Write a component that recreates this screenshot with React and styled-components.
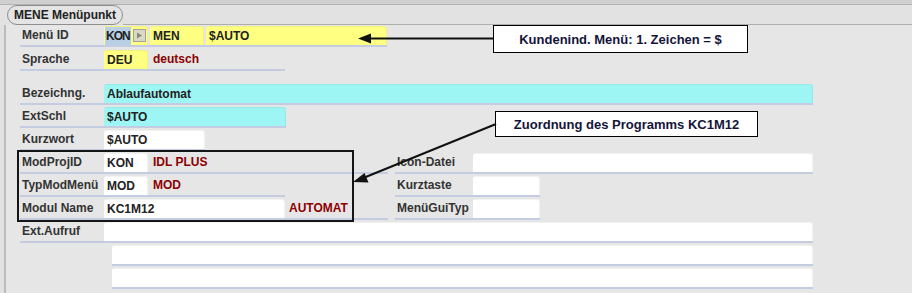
import React from "react";
import styled, { createGlobalStyle } from "styled-components";

const Global = createGlobalStyle`
  html, body { margin: 0; padding: 0; background: #e2e2e2; }
  body { font-family: "Liberation Sans", Arial, sans-serif; }
`;

const Page = styled.div`
  position: relative;
  width: 912px;
  height: 293px;
  overflow: hidden;
  display: flex;
  flex-direction: column;
  background: #e2e2e2;
`;

const TopStrip = styled.div`
  height: 4px;
  background: #d0d0d0;
  border-bottom: 1px solid #b2b2b2;
`;

const Header = styled.div`
  display: flex;
  height: 20px;
`;

const Tab = styled.div`
  margin-left: 7px;
  height: 20px;
  box-sizing: border-box;
  border: 1px solid #8e8e8e;
  border-radius: 10px;
  padding: 0 6px 0 6px;
  display: flex;
  align-items: center;
  font-weight: bold;
  font-size: 12px;
  color: #222;
  background: #e4e4e4;
  white-space: nowrap;
`;

const HeaderFill = styled.div`
  flex: 1;
  border-bottom: 1px solid #adadad;
`;

const Panel = styled.div`
  flex: 1;
  margin-left: 4px;
  border-left: 2px solid #bcbcbc;
  padding: 1px 0 0 14px;
  background: #e6e6e6;
  display: flex;
  flex-direction: column;
`;

const Row = styled.div`
  display: grid;
  grid-template-columns: 375px auto;
  margin-top: ${(p) => p.$mt || 0}px;
  margin-left: ${(p) => p.$ml || 0}px;
`;

const Group = styled.div`
  display: flex;
  align-items: flex-start;
  width: ${(p) => p.$w}px;
  height: 19px;
  border-bottom: 2px solid #c4cce1;
`;

const Label = styled.div`
  width: ${(p) => p.$w || 84}px;
  flex: none;
  box-sizing: border-box;
  padding-left: 2px;
  height: 19px;
  line-height: 19px;
  font-weight: bold;
  font-size: 12px;
  color: #333;
  white-space: nowrap;
`;

const Field = styled.div`
  position: relative;
  flex: none;
  width: ${(p) => p.$w}px;
  height: 19px;
  margin-left: ${(p) => p.$ml || 0}px;
  box-sizing: border-box;
  padding-left: 3px;
  background: ${(p) => p.$bg || "#ffffff"};
  border-radius: 3px 3px 0 0;
  box-shadow: inset -1px 1px 0 rgba(0, 0, 0, 0.05);
  display: flex;
  align-items: center;
  font-weight: bold;
  font-size: 12px;
  color: #222;
  white-space: nowrap;
`;

const Selected = styled.span`
  background: #b8cfe6;
  margin-left: -2px;
  padding: 2px 1px 2px 1px;
  letter-spacing: -1px;
`;

const DropButton = styled.div`
  position: absolute;
  left: 29px;
  top: 3px;
  width: 13px;
  height: 13px;
  box-sizing: border-box;
  border: 1px solid #a2a2a2;
  background: #d9d9c6;
  display: flex;
  align-items: center;
  justify-content: center;
`;

const Value = styled.div`
  height: 19px;
  line-height: 19px;
  padding-left: ${(p) => p.$pl || 5}px;
  font-weight: bold;
  font-size: 12px;
  color: #8b0000;
  white-space: nowrap;
`;

const Frame = styled.div`
  position: absolute;
  left: 17px;
  top: 150px;
  width: 337px;
  height: 72px;
  box-sizing: border-box;
  border: 2px solid #151515;
  pointer-events: none;
`;

const Note = styled.div`
  position: absolute;
  left: ${(p) => p.$x}px;
  top: ${(p) => p.$y}px;
  width: ${(p) => p.$w}px;
  height: ${(p) => p.$h}px;
  box-sizing: border-box;
  border: 1px solid #000;
  background: #fff;
  display: flex;
  align-items: center;
  justify-content: center;
  font-weight: bold;
  font-size: 13px;
  color: #14143a;
  white-space: nowrap;
`;

const Arrows = styled.svg`
  position: absolute;
  left: 0;
  top: 0;
  pointer-events: none;
`;

const YELLOW = "#ffff82";
const CYAN = "#9ef6f4";

export default function App() {
  return (
    <Page>
      <Global />
      <TopStrip />
      <Header>
        <Tab>MENE Menüpunkt</Tab>
        <HeaderFill />
      </Header>
      <Panel>
        <Row $mt={0}>
          <Group $w={367}>
            <Label>Menü ID</Label>
            <Field $w={44} $bg={YELLOW}>
              <Selected>KON</Selected>
              <DropButton>
                <svg width="7" height="7" viewBox="0 0 7 7">
                  <path d="M1 0.5 L6 3.5 L1 6.5 Z" fill="#8a8a7a" />
                </svg>
              </DropButton>
            </Field>
            <Field $w={54} $ml={2} $bg={YELLOW}>MEN</Field>
            <Field $w={181} $ml={2} $bg={YELLOW}>$AUTO</Field>
          </Group>
        </Row>
        <Row $mt={3}>
          <Group $w={265}>
            <Label>Sprache</Label>
            <Field $w={44} $bg={YELLOW}>DEU</Field>
            <Value>deutsch</Value>
          </Group>
        </Row>
        <Row $mt={13}>
          <Group $w={793}>
            <Label>Bezeichng.</Label>
            <Field $w={709} $bg={CYAN}>Ablaufautomat</Field>
          </Group>
        </Row>
        <Row $mt={2}>
          <Group $w={266}>
            <Label>ExtSchl</Label>
            <Field $w={182} $bg={CYAN}>$AUTO</Field>
          </Group>
        </Row>
        <Row $mt={2}>
          <Group $w={185}>
            <Label>Kurzwort</Label>
            <Field $w={101}>$AUTO</Field>
          </Group>
        </Row>
        <Row $mt={2}>
          <Group $w={368}>
            <Label>ModProjID</Label>
            <Field $w={44}>KON</Field>
            <Value>IDL PLUS</Value>
          </Group>
          <Group $w={418}>
            <Label $w={78}>Icon-Datei</Label>
            <Field $w={340} />
          </Group>
        </Row>
        <Row $mt={2}>
          <Group $w={265}>
            <Label>TypModMenü</Label>
            <Field $w={44}>MOD</Field>
            <Value>MOD</Value>
          </Group>
          <Group $w={145}>
            <Label $w={78}>Kurztaste</Label>
            <Field $w={67} />
          </Group>
        </Row>
        <Row $mt={2}>
          <Group $w={368}>
            <Label>Modul Name</Label>
            <Field $w={181}>KC1M12</Field>
            <Value $pl={4}>AUTOMAT</Value>
          </Group>
          <Group $w={145}>
            <Label $w={78}>MenüGuiTyp</Label>
            <Field $w={67} />
          </Group>
        </Row>
        <Row $mt={2}>
          <Group $w={793}>
            <Label>Ext.Aufruf</Label>
            <Field $w={709} />
          </Group>
        </Row>
        <Row $mt={2} $ml={92}>
          <Group $w={701}>
            <Field $w={701} />
          </Group>
        </Row>
        <Row $mt={2} $ml={92}>
          <Group $w={701}>
            <Field $w={701} />
          </Group>
        </Row>
      </Panel>

      <Frame />
      <Note $x={493} $y={25} $w={255} $h={28}>
        Kundenind. Menü: 1. Zeichen = $
      </Note>
      <Note $x={495} $y={111} $w={263} $h={26}>
        Zuordnung des Programms KC1M12
      </Note>
      <Arrows width="912" height="293" viewBox="0 0 912 293">
        <line x1="493" y1="38.5" x2="368" y2="38.5" stroke="#111" strokeWidth="2" />
        <path d="M358 38.5 L371 33.5 L371 43.5 Z" fill="#111" />
        <line x1="496" y1="124" x2="362" y2="178.5" stroke="#111" strokeWidth="2" />
        <path d="M353 182 L364.5 173 L368.5 182.5 Z" fill="#111" />
      </Arrows>
    </Page>
  );
}
